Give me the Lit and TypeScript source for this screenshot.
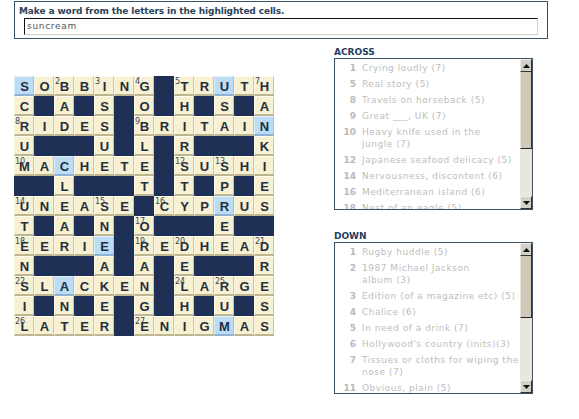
import { LitElement, html, css } from "lit";
import { customElement } from "lit/decorators.js";

const ROWS = [
  "SOBBING#TRUTH",
  "C#A#S#O#H#S#A",
  "RIDES#BRITAIN",
  "U###U#L#R###K",
  "MACHETE#SUSHI",
  "##L###T#T#P#E",
  "UNEASE#CYPRUS",
  "T#A#N#O###E##",
  "EERIE#REDHEAD",
  "N###A#A#E###R",
  "SLACKEN#LARGE",
  "I#N#E#G#H#U#S",
  "LATER#ENIGMAS",
];
const HIGHLIGHT = new Set(["0,0", "0,10", "2,12", "4,2", "6,10", "8,4", "10,2", "12,10"]);
const NUMBERS: Record<string, number> = {
  "0,2": 2, "0,4": 3, "0,6": 4, "0,8": 5, "0,12": 7,
  "2,0": 8, "2,6": 9, "4,0": 10, "4,8": 12, "4,10": 13,
  "6,0": 14, "6,4": 15, "6,7": 16, "7,6": 17,
  "8,0": 18, "8,6": 19, "8,8": 20, "8,12": 21,
  "10,0": 22, "10,8": 24, "10,10": 25, "12,0": 26, "12,6": 27,
};
const ACROSS: [number, string][] = [
  [1, "Crying loudly\u00a0(7)"], [5, "Real story\u00a0(5)"], [8, "Travels on horseback\u00a0(5)"],
  [9, "Great ___, UK\u00a0(7)"], [10, "Heavy knife used in the jungle\u00a0(7)"],
  [12, "Japanese seafood delicacy\u00a0(5)"], [14, "Nervousness, discontent\u00a0(6)"],
  [16, "Mediterranean island\u00a0(6)"], [18, "Nest of an eagle\u00a0(5)"],
];
const DOWN: [number, string][] = [
  [1, "Rugby huddle\u00a0(5)"], [2, "1987 Michael Jackson album\u00a0(3)"],
  [3, "Edition (of a magazine etc)\u00a0(5)"], [4, "Chalice\u00a0(6)"], [5, "In need of a drink\u00a0(7)"],
  [6, "Hollywood's country (inits)(3)"], [7, "Tissues or cloths for wiping the nose\u00a0(7)"],
  [11, "Obvious, plain\u00a0(5)"],
];

@customElement("app-root")
export class AppRoot extends LitElement {
  static styles = css`
    :host { display: block; width: 579px; height: 419px; overflow: hidden; background: #fff;
      font-family: "DejaVu Sans", Verdana, sans-serif; }
    .page { display: flex; flex-direction: column; padding: 1px 0 0 14px; }
    .prompt { width: 534px; height: 38px; box-sizing: border-box; border: 1px solid #3a5264;
      padding: 3px 0 0 4px; }
    .prompt-title { font-size: 9px; line-height: 12px; font-weight: bold; color: #2b4358; white-space: nowrap; letter-spacing: -0.12px; }
    .field { width: 514px; height: 17px; box-sizing: border-box; margin: 1px 0 0 5px;
      border: 1px solid #d4d0c8; border-top: 1px solid #111; border-left: 1px solid #111;
      font-size: 9px; line-height: 15px; padding-left: 2px; letter-spacing: 0.7px; color: #555; }
    .main { display: flex; margin-top: 8px; }
    .grid { display: grid; grid-template-columns: repeat(13, 20px); grid-auto-rows: 20px;
      margin-top: 29px; background: #1e3055; align-self: flex-start; }
    .cell { position: relative; box-sizing: border-box; display: flex; align-items: flex-end; justify-content: center; }
    .tile { background: #f7f0d2; border-top: 1px solid #fffdf0; border-left: 1px solid #fbf6e0;
      border-right: 1px solid #cdc6a4; border-bottom: 2px solid #bdb692; padding-left: 1px; }
    .tile.hl { background: #bcdcf5; border-top-color: #e6f3fc; border-left-color: #d9ecfa;
      border-right-color: #a2c2de; border-bottom-color: #8fb2d2; }
    .letter { font-family: "Liberation Sans", Arial, sans-serif; font-size: 13px; line-height: 15px; font-weight: bold; color: #1f2f3d; }
    .num { position: absolute; left: 0; top: 0; font-size: 8px; line-height: 9px; color: #33495c; }
    .side { margin-left: 60px; display: flex; flex-direction: column; }
    .head { font-size: 9px; line-height: 11px; font-weight: bold; color: #1f3f5f; }
    .down { margin-top: 21px; }
    .box { width: 199px; height: 152px; box-sizing: border-box; border: 1px solid #3a5264; display: flex; overflow: hidden; }
    .list { flex: 1; min-width: 0; overflow: hidden; display: flex; flex-direction: column; gap: 4px; padding-top: 3px; }
    .clue { display: grid; grid-template-columns: 21px 1fr; column-gap: 6px; flex: none;
      font-size: 9px; line-height: 12px; color: #bdbdbd; letter-spacing: 0.52px; }
    .n { text-align: right; font-weight: bold; letter-spacing: 0; color: #b9b9b9; }
    .bar { width: 12px; flex: none; display: flex; flex-direction: column; background: #e9e6de; }
    .btn { height: 13px; flex: none; box-sizing: border-box; background: #d4d0c8;
      border-top: 1px solid #eee; border-left: 1px solid #eee; border-right: 1px solid #333; border-bottom: 1px solid #333;
      display: flex; align-items: center; justify-content: center; }
    .btn svg { display: block; }
    .thumb { box-sizing: border-box; background: #cfc9ba; border-bottom: 1px solid #222; border-right: 1px solid #333; border-left: 1px solid #e8e5dd; }
    .gap { flex: 1; }
  `;

  private clues(items: [number, string][], thumb: number) {
    return html`
      <div class="list">
        ${items.map(([n, t]) => html`<div class="clue"><span class="n">${n}</span><span>${t}</span></div>`)}
      </div>
      <div class="bar">
        <div class="btn"><svg width="7" height="4" viewBox="0 0 7 4"><path d="M3.5 0 7 4H0z" fill="#111"/></svg></div>
        <div class="thumb" style="height:${thumb}px"></div>
        <div class="gap"></div>
        <div class="btn"><svg width="7" height="4" viewBox="0 0 7 4"><path d="M0 0h7L3.5 4z" fill="#111"/></svg></div>
      </div>`;
  }

  render() {
    return html`
      <div class="page">
        <div class="prompt">
          <div class="prompt-title">Make a word from the letters in the highlighted cells.</div>
          <div class="field">suncream</div>
        </div>
        <div class="main">
          <div class="grid">
            ${ROWS.flatMap((row, r) =>
              [...row].map((ch, c) => {
                if (ch === "#") return html`<div class="cell"></div>`;
                const key = `${r},${c}`;
                const num = NUMBERS[key];
                return html`<div class="cell tile ${HIGHLIGHT.has(key) ? "hl" : ""}">
                  <span class="letter">${ch}</span>
                  ${num ? html`<span class="num">${num}</span>` : ""}
                </div>`;
              })
            )}
          </div>
          <div class="side">
            <div class="head">ACROSS</div>
            <div class="box">${this.clues(ACROSS, 77)}</div>
            <div class="head down">DOWN</div>
            <div class="box">${this.clues(DOWN, 62)}</div>
          </div>
        </div>
      </div>`;
  }
}
